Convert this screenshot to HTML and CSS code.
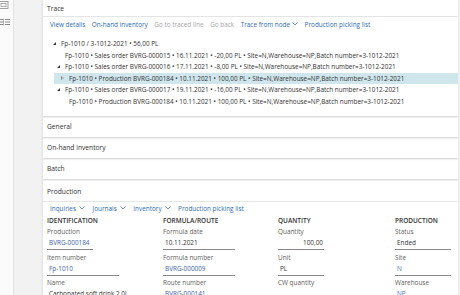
FILE: index.html
```html
<!DOCTYPE html>
<html>
<head>
<meta charset="utf-8">
<link rel="stylesheet" href="styles.css">
</head>
<body>
<div class="app">
  <aside class="rail">
    <svg class="rail-icon" width="10" height="8" viewBox="0 0 10 8"><rect x="-2" y="0.5" width="10" height="7" fill="none" stroke="#8a8a8a" stroke-width="0.8"/><rect x="1" y="2.5" width="5" height="3" fill="none" stroke="#8a8a8a" stroke-width="0.7"/></svg>
    <svg class="rail-icon" width="11" height="8" viewBox="0 0 11 8"><path d="M0 1.5h3M0 4h3M0 6.5h3M5 1.5h5M5 4h5M5 6.5h5" stroke="#7a7a7a" stroke-width="0.9"/><path d="M3.5 0.5v7" stroke="#7a7a7a" stroke-width="0.6"/></svg>
  </aside>
  <div class="content">
    <main class="card">
      <section class="sec trace">
        <div class="sec-head">Trace</div>
        <div class="trace-body">
          <nav class="toolbar">
            <a class="act">View details</a>
            <a class="act">On-hand inventory</a>
            <a class="act off">Go to traced line</a>
            <a class="act off">Go back</a>
            <a class="act">Trace from node <svg class="chev" width="6" height="4" viewBox="0 0 6 4"><path d="M0.5 0.5L3 3L5.5 0.5" fill="none" stroke="#2d6db5" stroke-width="0.7"/></svg></a>
            <a class="act">Production picking list</a>
          </nav>
          <ul class="tree">
            <li class="node l0"><span class="tw open"></span>Fp-1010 / 3-1012-2021 • 56,00 PL</li>
            <li class="node l1"><span class="tw"></span>Fp-1010 • Sales order BVRG-000015 • 16.11.2021 • -20,00 PL • Site=N,Warehouse=NP,Batch number=3-1012-2021</li>
            <li class="node l1"><span class="tw open"></span>Fp-1010 • Sales order BVRG-000016 • 17.11.2021 • -8,00 PL • Site=N,Warehouse=NP,Batch number=3-1012-2021</li>
            <li class="node l2 sel"><span class="tw closed"></span>Fp-1010 • Production BVRG-000184 • 10.11.2021 • 100,00 PL • Site=N,Warehouse=NP,Batch number=3-1012-2021</li>
            <li class="node l1"><span class="tw open"></span>Fp-1010 • Sales order BVRG-000017 • 19.11.2021 • -16,00 PL • Site=N,Warehouse=NP,Batch number=3-1012-2021</li>
            <li class="node l2"><span class="tw"></span>Fp-1010 • Production BVRG-000184 • 10.11.2021 • 100,00 PL • Site=N,Warehouse=NP,Batch number=3-1012-2021</li>
          </ul>
        </div>
      </section>
      <section class="sec fold"><div class="sec-head">General</div></section>
      <section class="sec fold"><div class="sec-head">On-hand inventory</div></section>
      <section class="sec fold"><div class="sec-head">Batch</div></section>
      <section class="sec prod">
        <div class="sec-head prod-head">Production</div>
        <nav class="toolbar prod-bar">
          <a class="act">Inquiries <svg class="chev" width="6" height="4" viewBox="0 0 6 4"><path d="M0.5 0.5L3 3L5.5 0.5" fill="none" stroke="#2d6db5" stroke-width="0.7"/></svg></a>
          <a class="act">Journals <svg class="chev" width="6" height="4" viewBox="0 0 6 4"><path d="M0.5 0.5L3 3L5.5 0.5" fill="none" stroke="#2d6db5" stroke-width="0.7"/></svg></a>
          <a class="act">Inventory <svg class="chev" width="6" height="4" viewBox="0 0 6 4"><path d="M0.5 0.5L3 3L5.5 0.5" fill="none" stroke="#2d6db5" stroke-width="0.7"/></svg></a>
          <a class="act">Production picking list</a>
        </nav>
        <div class="groups">
          <div class="group">
            <div class="g-title">IDENTIFICATION</div>
            <div class="field"><div class="lbl">Production</div><div class="val link w46">BVRG-000184</div></div>
            <div class="field"><div class="lbl">Item number</div><div class="val link w72">Fp-1010</div></div>
            <div class="field"><div class="lbl">Name</div><div class="val w72">Carbonated soft drink 2.0l</div></div>
          </div>
          <div class="group">
            <div class="g-title">FORMULA/ROUTE</div>
            <div class="field"><div class="lbl">Formula date</div><div class="val w72">10.11.2021</div></div>
            <div class="field"><div class="lbl">Formula number</div><div class="val link w72">BVRG-000009</div></div>
            <div class="field"><div class="lbl">Route number</div><div class="val link w72">BVRG-000141</div></div>
          </div>
          <div class="group">
            <div class="g-title">QUANTITY</div>
            <div class="field"><div class="lbl">Quantity</div><div class="val num w46">100,00</div></div>
            <div class="field"><div class="lbl">Unit</div><div class="val w46">PL</div></div>
            <div class="field"><div class="lbl">CW quantity</div><div class="val plain"></div></div>
          </div>
          <div class="group">
            <div class="g-title">PRODUCTION</div>
            <div class="field"><div class="lbl">Status</div><div class="val w56">Ended</div></div>
            <div class="field"><div class="lbl">Site</div><div class="val link2 w56">N</div></div>
            <div class="field"><div class="lbl">Warehouse</div><div class="val link2 w56">NP</div></div>
          </div>
        </div>
      </section>
    </main>
  </div>
</div>
</body>
</html>
```

FILE: styles.css
```css
* { box-sizing: border-box; margin: 0; padding: 0; }

html, body {
  width: 460px;
  height: 295px;
  overflow: hidden;
}

body {
  font-family: "Open Sans", "Noto Sans", sans-serif;
  font-size: 6.4px;
  color: #323130;
  background: #f2f2f2;
}

.app {
  display: flex;
  height: 295px;
}

.rail {
  width: 14px;
  flex: none;
  background: #fbfbfb;
  border-right: 1px solid #e3e3e3;
  display: flex;
  flex-direction: column;
  gap: 9px;
  padding-top: 1px;
}

.rail-icon { display: block; }

.content {
  flex: 1;
  padding: 0 2px 0 28px;
  min-width: 0;
}

.card {
  background: #fff;
  height: 100%;
  border-left: 1px solid #e6e6e6;
  box-shadow: 0 0 2px rgba(0,0,0,0.08);
  overflow: hidden;
}

.sec {
  border-bottom: 1px solid #dcdcdc;
  box-shadow: 0 1px 1px rgba(0,0,0,0.06);
}

.sec-head {
  height: 17px;
  line-height: 17px;
  padding-left: 4px;
  font-size: 6.7px;
  color: #323130;
}

.trace .sec-head {
  border-bottom: 1px solid #e4e4e4;
}

.fold .sec-head {
  height: 20px;
  line-height: 20px;
}

.toolbar {
  display: flex;
  align-items: center;
  height: 14px;
  padding-left: 7px;
  gap: 6.5px;
}

.act {
  color: #2d6db5;
  white-space: nowrap;
  display: inline-flex;
  align-items: center;
  gap: 2px;
}

.act.off { color: #a8a8a8; }

.chev { display: block; }

.tree {
  list-style: none;
  padding: 7px 0 9px;
}

.node {
  display: flex;
  align-items: center;
  height: 11.5px;
  white-space: nowrap;
  color: #323130;
}

.node.l0 { padding-left: 9px; }
.node.l1 { padding-left: 13px; }
.node.l2 { padding-left: 17px; }

.node.sel {
  margin-left: 11px;
  padding-left: 6px;
  background: #cfe6ed;
}

.tw {
  width: 9px;
  height: 11px;
  flex: none;
  position: relative;
}

.tw.open::before {
  content: "";
  position: absolute;
  left: 1px;
  top: 4px;
  width: 0;
  height: 0;
  border-left: 3.5px solid transparent;
  border-bottom: 3.5px solid #3a3a3a;
}

.tw.closed::before {
  content: "";
  position: absolute;
  left: 1px;
  top: 3.5px;
  width: 0;
  height: 0;
  border-top: 2.5px solid transparent;
  border-bottom: 2.5px solid transparent;
  border-left: 3px solid #8a8a8a;
}

.tw.closed::after {
  content: "";
  position: absolute;
  left: 1.7px;
  top: 4.6px;
  width: 0;
  height: 0;
  border-top: 1.4px solid transparent;
  border-bottom: 1.4px solid transparent;
  border-left: 1.6px solid #cfe6ed;
}

.prod { border-bottom: none; box-shadow: none; }

.prod-head {
  height: 22px;
  line-height: 23px;
  border-bottom: 1px solid #e6e6e6;
}

.prod-bar {
  height: 12px;
  padding-left: 7px;
  gap: 7.5px;
}

.prod-bar .act { gap: 3px; }

.groups {
  display: grid;
  grid-template-columns: 116px 115px 117px 60px;
  padding-left: 4px;
  padding-top: 2px;
}

.g-title {
  font-weight: 600;
  font-size: 6.5px;
  line-height: 10px;
  color: #323130;
  margin-bottom: 1px;
}

.field {
  height: 25.5px;
}

.lbl {
  color: #605e5c;
  line-height: 10px;
  height: 10px;
}

.val {
  height: 13px;
  line-height: 12px;
  padding-left: 2px;
  border-bottom: 1px solid #8a8886;
  color: #323130;
  white-space: nowrap;
}

.val.plain { border-bottom: none; }
.val.link { color: #3a5ea8; }
.val.link2 { color: #4a78c0; }
.val.num { text-align: right; padding-right: 1px; }

.w46 { width: 46px; }
.w56 { width: 56px; }
.w72 { width: 72px; }

.group:first-child .field:last-child .val { border-bottom: none; }
.group:nth-child(2) .field:last-child .val { border-bottom: none; }
```
